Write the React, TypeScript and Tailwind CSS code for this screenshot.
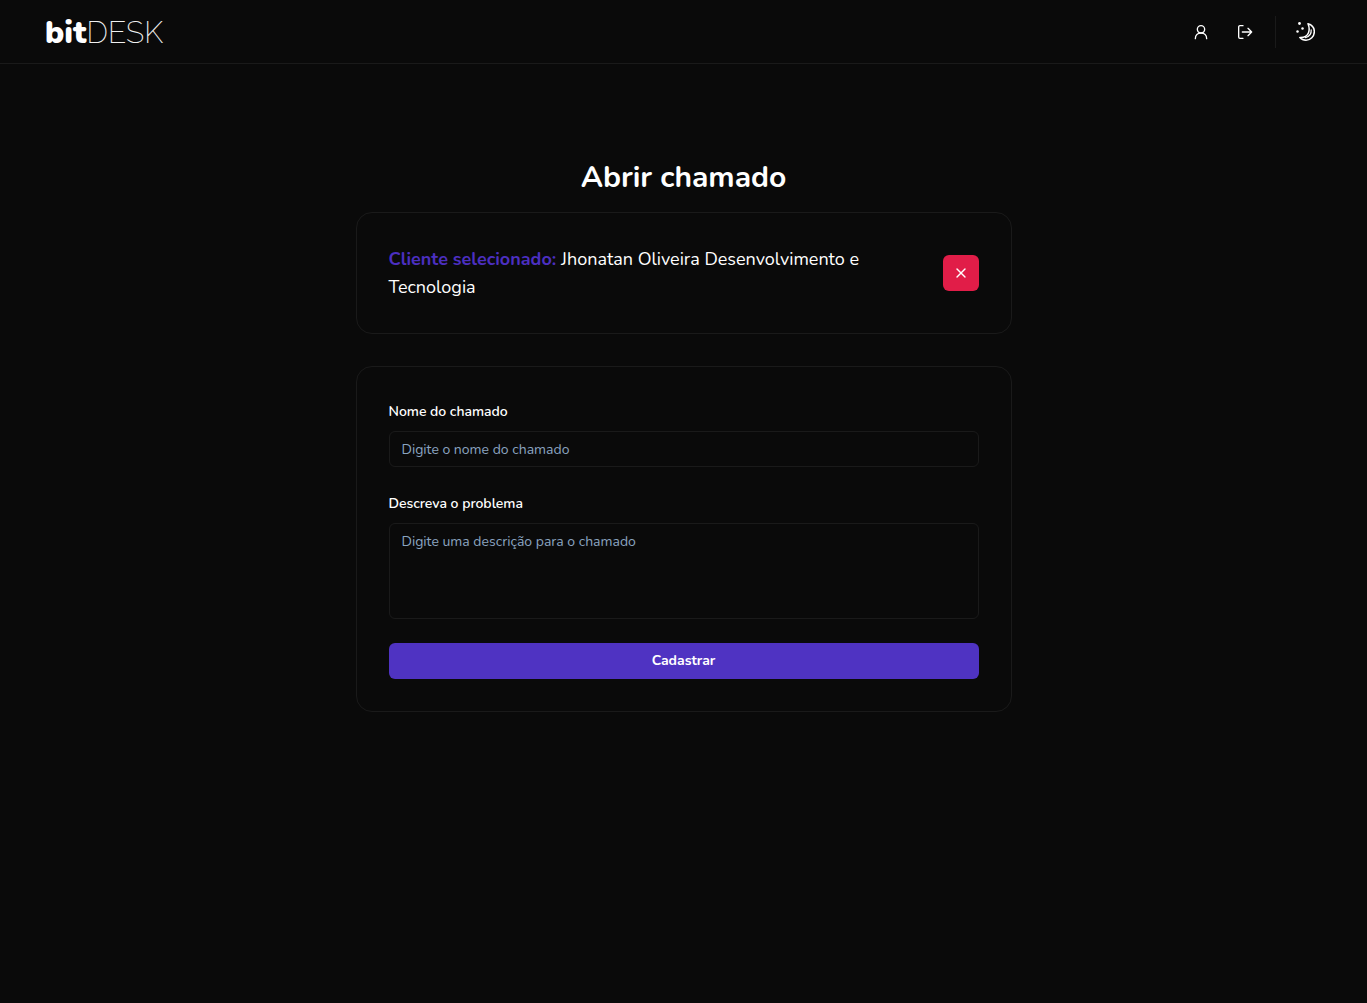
import { X } from 'lucide-react';

const font = "font-['Nunito','Noto_Sans','Open_Sans',sans-serif]";

function UserIcon() {
  return (
    <svg width="16" height="16" viewBox="0 0 24 24" fill="none" stroke="currentColor" strokeWidth="2" strokeLinecap="round" strokeLinejoin="round">
      <circle cx="12" cy="8" r="5.500" />
      <path d="M3.500 22c0-5 3.500-8.500 8.500-8.500s8.500 3.500 8.500 8.500" />
    </svg>
  );
}

function LogoutIcon() {
  return (
    <svg width="16" height="16" viewBox="0 0 24 24" fill="none" stroke="currentColor" strokeWidth="2" strokeLinecap="round" strokeLinejoin="round">
      <path d="M9 2.500H4.500a2 2 0 0 0-2 2v15a2 2 0 0 0 2 2H9" />
      <path d="M8 12h14M16.500 6.500 22 12l-5.500 5.500" />
    </svg>
  );
}

function MoonIcon() {
  return (
    <svg width="20" height="20" viewBox="0 0 24 24" fill="none" stroke="currentColor" strokeLinecap="round" strokeLinejoin="round">
      <path d="M15.600 2c4.500 1.300 7.600 5 7.600 9.500 0 5.800-4.700 10.300-10 10.300-3 0-5.500-1-7.400-3.200 4.600.2 8.800-1.800 10.400-5.800 1.200-3.200.9-7.200-.6-10.800z" strokeWidth="1.800" />
      <path d="M19.400 9.500c.4 4.200-2.400 8-6.900 9.300" strokeWidth="1.500" />
      <circle cx="5.400" cy="1.800" r="1.700" fill="currentColor" stroke="none" />
      <circle cx="3" cy="11.400" r="1.500" fill="currentColor" stroke="none" />
      <circle cx="9" cy="7.800" r="1.500" fill="currentColor" stroke="none" />
    </svg>
  );
}

export default function App() {
  return (
    <div className={`min-h-[1003px] bg-[#0a0a0a] text-white ${font}`}>
      {/* Header */}
      <header className="h-16 border-b border-[#1a1a1a] flex items-center justify-between pl-[45px] pr-[52px]">
        <div className="flex items-baseline leading-none pt-1">
          <span className="text-[31px] font-black tracking-[0.15px]">bit</span>
          <span className="text-[30px] font-['Raleway','Lato',sans-serif] font-extralight text-[#f0f0f0]">DESK</span>
        </div>
        <div className="flex items-center">
          <button className="w-9 h-9 flex items-center justify-center text-white"><UserIcon /></button>
          <button className="ml-2 w-9 h-9 flex items-center justify-center text-white"><LogoutIcon /></button>
          <div className="ml-[12px] mr-[19px] w-px h-8 bg-[#1a1a1a]" />
          <MoonIcon />
        </div>
      </header>

      {/* Conteudo */}
      <main className="w-[656px] mx-auto pt-24">
        <h1 className="text-3xl leading-9 font-bold text-center mb-4">Abrir chamado</h1>

        <div className="rounded-2xl border border-[#1a1a1a] p-8 flex items-center justify-between mb-8">
          <p className="text-lg leading-7 w-[500px]">
            <span className="font-bold text-[#4c2fc0]">Cliente selecionado: </span>
            Jhonatan Oliveira Desenvolvimento e Tecnologia
          </p>
          <button className="w-9 h-9 rounded-md bg-[#e11d48] flex items-center justify-center">
            <X size={16} />
          </button>
        </div>

        <form className="rounded-2xl border border-[#1a1a1a] p-8">
          <label className="block text-sm leading-[26px] font-semibold tracking-[-0.02px] mb-[6px]">Nome do chamado</label>
          <input
            type="text"
            placeholder="Digite o nome do chamado"
            className="block w-full h-9 mb-6 px-3 rounded-md border border-[#1a1a1a] bg-transparent text-sm outline-none placeholder:text-[#8aa4c0]"
          />
          <label className="block text-sm leading-[26px] font-semibold tracking-[-0.02px] mb-[6px]">Descreva o problema</label>
          <textarea
            placeholder="Digite uma descrição para o chamado"
            className="block w-full h-24 mb-6 px-3 py-2 rounded-md border border-[#1a1a1a] bg-transparent text-sm outline-none resize-none placeholder:text-[#8aa4c0]"
          />
          <button type="button" className="w-full h-9 rounded-md bg-[#4f33c2] text-sm font-bold">Cadastrar</button>
        </form>
      </main>
    </div>
  );
}
